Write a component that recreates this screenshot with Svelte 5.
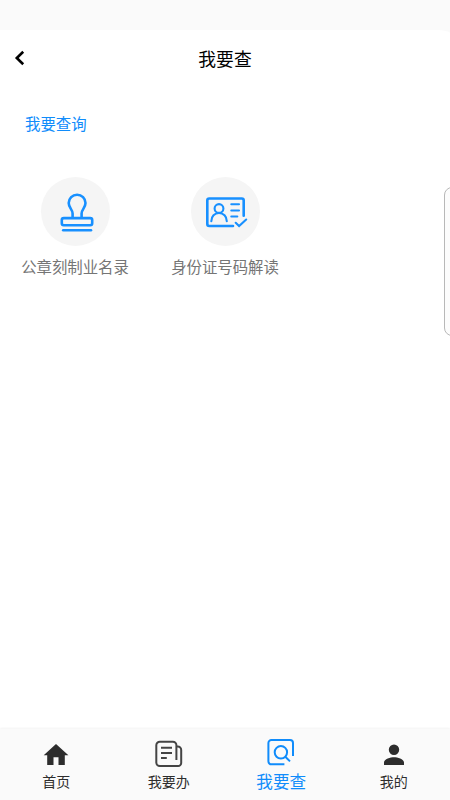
<script lang="ts">
	interface Service {
		icon: string;
		label: string;
	}

	interface Tab {
		id: string;
		label: string;
	}

	const services: Service[] = [
		{ icon: "stamp", label: "公章刻制业名录" },
		{ icon: "idcard", label: "身份证号码解读" },
	];

	const tabs: Tab[] = [
		{ id: "home", label: "首页" },
		{ id: "handle", label: "我要办" },
		{ id: "query", label: "我要查" },
		{ id: "mine", label: "我的" },
	];

	let active = $state("query");
</script>

<div class="page">
	<div class="status-bar"></div>

	<header class="header">
		<button class="back" aria-label="返回">
			<svg width="12" height="18" viewBox="0 0 12 18">
				<path d="M9.2 2.7 2.8 9l6.4 6.3" />
			</svg>
		</button>
		<h1>我要查</h1>
	</header>

	<main class="content">
		<h2>我要查询</h2>
		<div class="services">
			{#each services as service}
				<div class="service">
					<div class="circle">
						<svg class="line-icon" width="69" height="69" viewBox="0 0 69 69">
							{#if service.icon === "stamp"}
								<path d="M31.6 40.8v-4.2c0-4.2-3.9-5.8-3.9-10.5a8.4 8.4 0 0 1 16.8 0c0 4.7-3.9 6.3-3.9 10.500v4.200" />
								<rect x="20.8" y="41.1" width="30.4" height="7.2" rx="2" />
								<path d="M22.2 53.2h27.8" />
							{:else}
								<path d="M42 49H18.3a2 2 0 0 1-2-2V23.500a2 2 0 0 1 2-2h32.400a2 2 0 0 1 2 2v15.200" />
								<g class="thin">
									<circle cx="28" cy="31.5" r="4.4" />
									<path d="M20.3 44.2c0-4.800 3.300-8.200 7.700-8.200s7.800 3.400 7.800 8.200" />
									<path d="M40.300 27.200H48M40.300 33.500H48M40.300 39.500h6" />
									<path d="m44.700 45.800 3.400 3.300 7.100-6.600" />
								</g>
							{/if}
						</svg>
					</div>
					<span>{service.label}</span>
				</div>
			{/each}
		</div>
	</main>

	<!-- edge handle of the floating panel -->
	<div class="side-panel"></div>

	<nav class="tabbar">
		{#each tabs as tab}
			<button
				class="tab"
				class:active={tab.id === active}
				onclick={() => (active = tab.id)}
			>
				<svg width="30" height="30" viewBox="0 0 30 30">
					{#if tab.id === "home"}
						<path class="solid" d="M12.5 26v-7.800h5V26h6.300v-9.800h3.600L15 5 2.700 16.200h3.500V26z" />
					{:else if tab.id === "handle"}
						<path class="soft" d="M22.400 21V6.200a3.500 3.500 0 0 0-3.500-3.500H5.800a3.500 3.500 0 0 0-3.500 3.500v17.300A3.500 3.500 0 0 0 5.800 27h18.400a3 3 0 0 0 3-3V11a3.500 3.500 0 0 0-3.500-3.500h-1.300" />
						<path class="soft" d="M7 8.700h11M7 14h11M7 19h5.800" />
					{:else if tab.id === "query"}
						<path d="M18.400 27.300H5.400a3 3 0 0 1-3-3V6a3 3 0 0 1 3-3H24a3 3 0 0 1 3 3v13" />
						<circle cx="14.900" cy="15.300" r="6.200" />
						<path d="m19.300 19.700 4.700 4.700" />
					{:else}
						<path class="solid" d="M15 5.500a5.200 5.200 0 1 1 0 10.400a5.200 5.200 0 0 1 0-10.400zM5 26v-2.500c0-3.400 6.600-5.200 10-5.200s10 1.800 10 5.200V26z" />
					{/if}
				</svg>
				<span>{tab.label}</span>
			</button>
		{/each}
	</nav>
</div>

<style>
	:global(body) {
		margin: 0;
		background: #fafafa;
	}

	.page {
		position: relative;
		display: flex;
		flex-direction: column;
		height: 800px;
		overflow: hidden;
		font-family: "Noto Sans CJK SC", sans-serif;
		background: #fafafa;
	}

	button {
		border: 0;
		padding: 0;
		background: none;
		font-family: inherit;
	}

	svg {
		display: block;
		fill: none;
		stroke: currentColor;
		stroke-width: 2;
		stroke-linecap: butt;
	}

	.status-bar {
		height: 30px;
	}

	.header {
		display: grid;
		grid-template-columns: 50px 1fr 50px;
		align-items: center;
		height: 56px;
		background: #fff;
		border-top-right-radius: 14px 3px;
	}

	.back {
		justify-self: start;
		margin-left: 14px;
		color: #000;
	}

	.back svg {
		stroke-width: 2.6;
	}

	h1 {
		margin: 0;
		padding-bottom: 1px;
		text-align: center;
		font-size: 17.8px;
		line-height: 26px;
		font-weight: 400;
		color: #000;
	}

	.content {
		flex: 1;
		padding-top: 25px;
		background: #fff;
	}

	h2 {
		margin: 0 0 0 25px;
		font-size: 15.4px;
		line-height: 24px;
		font-weight: 400;
		color: #108cfb;
	}

	.services {
		display: grid;
		grid-template-columns: repeat(3, 150px);
		margin-top: 42px;
	}

	.service {
		display: flex;
		flex-direction: column;
		align-items: center;
		font-size: 15.4px;
		line-height: 24px;
		color: #757575;
	}

	.circle {
		width: 69px;
		height: 69px;
		margin-bottom: 8px;
		border-radius: 50%;
		background: #f5f5f5;
		color: #1890ff;
	}

	.line-icon {
		stroke-width: 2.6;
		stroke-linecap: round;
	}

	.thin {
		stroke-width: 2.1;
	}

	.side-panel {
		position: absolute;
		top: 187px;
		right: -10px;
		box-sizing: border-box;
		width: 16px;
		height: 149px;
		border: 1px solid #b8b8b8;
		border-radius: 8px;
		background: #fcfcfc;
	}

	.tabbar {
		display: grid;
		grid-template-columns: repeat(4, 1fr);
		height: 71px;
		background: #fafafa;
		box-shadow: 0 -1px 2px rgba(0, 0, 0, 0.05);
	}

	.tab {
		display: flex;
		flex-direction: column;
		align-items: center;
		padding-top: 10px;
		font-size: 14px;
		line-height: 20px;
		color: #2d2d2d;
	}

	.tab span {
		margin-top: 2px;
	}

	.tab.active {
		padding-top: 8px;
		font-size: 16.6px;
		color: #108cfb;
	}

	.tab.active span {
		margin-top: 4px;
	}

	.solid {
		fill: currentColor;
		stroke: none;
	}

	.soft {
		stroke: #444;
	}
</style>
